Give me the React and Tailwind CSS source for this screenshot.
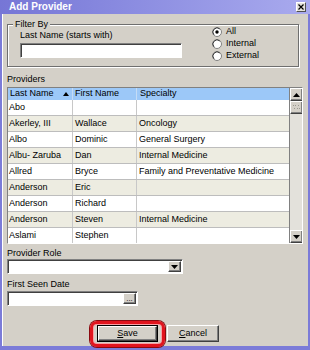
const rows = [
  ['Abo', '', ''],
  ['Akerley, III', 'Wallace', 'Oncology'],
  ['Albo', 'Dominic', 'General Surgery'],
  ['Albu- Zaruba', 'Dan', 'Internal Medicine'],
  ['Allred', 'Bryce', 'Family and Preventative Medicine'],
  ['Anderson', 'Eric', ''],
  ['Anderson', 'Richard', ''],
  ['Anderson', 'Steven', 'Internal Medicine'],
  ['Aslami', 'Stephen', ''],
]

const raised =
  'bg-[#d4d0c8] border border-t-white border-l-white border-r-[#404040] border-b-[#404040] shadow-[inset_-1px_-1px_0_#808080]'
const sunken =
  'bg-white border border-t-[#808080] border-l-[#808080] border-r-white border-b-white shadow-[inset_1px_1px_0_#404040]'

function Radio({ label, checked }) {
  return (
    <div className="h-[12px] flex items-center gap-[4px]">
      <svg width="10" height="10" viewBox="0 0 10 10">
        <circle cx="5" cy="5" r="4.5" fill="#ffffff" stroke="#808080" />
        <path d="M2 7.8 A4 4 0 0 1 2.2 2.2 A4 4 0 0 1 7.8 2" fill="none" stroke="#404040" />
        {checked && <circle cx="5" cy="5" r="1.7" fill="#000000" />}
      </svg>
      <span>{label}</span>
    </div>
  )
}

function ArrowButton({ dir }) {
  return (
    <div className={`w-[13px] h-[13px] flex items-center justify-center ${raised}`}>
      <svg width="7" height="4" viewBox="0 0 7 4">
        {dir === 'up' ? <path d="M3.5 0 L7 4 L0 4 Z" fill="#000" /> : <path d="M0 0 L7 0 L3.5 4 Z" fill="#000" />}
      </svg>
    </div>
  )
}

export default function App() {
  return (
    <div className="w-[310px] h-[350px] flex flex-col bg-[#7b7bd8] px-[2px] pb-[4px] font-['Liberation_Sans',Arial,sans-serif] text-[9px] text-black overflow-hidden">
      {/* title bar */}
      <div className="-mx-[2px] h-[14px] shrink-0 flex items-center justify-between pl-[9px] pr-[4px] bg-gradient-to-r from-[#7676d6] to-[#a9aaee]">
        <span className="text-white font-bold text-[10px] leading-none">Add Provider</span>
        <div className="w-[10px] h-[10px] bg-[#e4e2dc] border border-t-white border-l-white border-r-[#505050] border-b-[#505050] flex items-center justify-center">
          <svg width="6" height="6" viewBox="0 0 6 6">
            <path d="M0.5 0.5 L5.5 5.5 M5.5 0.5 L0.5 5.5" stroke="#000" strokeWidth="1.2" />
          </svg>
        </div>
      </div>

      {/* body */}
      <div className="flex-1 bg-[#d4d0c8] pl-[5px] pt-[10px] shadow-[inset_1px_0_0_#ffffff]">
        {/* filter group */}
        <div className="relative w-[292px] h-[43px] border border-[#6f6f6f] shadow-[1px_1px_0_#ffffff,inset_1px_1px_0_#ffffff] flex">
          <span className="absolute -top-[6px] left-[5px] px-[2px] bg-[#d4d0c8] leading-[11px]">Filter By</span>
          <div className="w-[204px] pl-[12px] pt-[5px]">
            <div className="leading-[11px]">Last Name (starts with)</div>
            <div className={`mt-[2px] w-[162px] h-[15px] ${sunken}`} />
          </div>
          <div className="pt-[1px]">
            <Radio label="All" checked />
            <Radio label="Internal" />
            <Radio label="External" />
          </div>
        </div>

        <div className="mt-[7px] leading-[11px]">Providers</div>

        {/* grid */}
        <div className="mt-[2px] w-[296px] h-[157px] border border-t-[#808080] border-l-[#808080] border-r-white border-b-white flex overflow-hidden bg-white">
          <div className="w-[281px] flex flex-col overflow-hidden">
            <div className="h-[12px] shrink-0 flex bg-[#9cc8f8]">
              <div className="w-[65px] pl-[2px] pr-[3px] flex items-center justify-between border-r border-[#c4dcf6]">
                <span>Last Name</span>
                <svg width="6" height="4" viewBox="0 0 6 4">
                  <path d="M3 0 L6 4 L0 4 Z" fill="#000" />
                </svg>
              </div>
              <div className="w-[64px] pl-[2px] flex items-center border-r border-[#c4dcf6]">First Name</div>
              <div className="flex-1 pl-[3px] flex items-center">Specialty</div>
            </div>
            {rows.map((r, i) => (
              <div
                key={i}
                className={`h-[16px] shrink-0 flex border-b border-[#bdbdbd] ${i % 2 ? 'bg-[#edece1]' : 'bg-white'}`}
              >
                <div className="w-[65px] pl-[1px] flex items-center border-r border-[#c8c8c8]">{r[0]}</div>
                <div className="w-[64px] pl-[2px] flex items-center border-r border-[#c8c8c8]">{r[1]}</div>
                <div className="flex-1 pl-[2px] flex items-center">{r[2]}</div>
              </div>
            ))}
          </div>
          <div className="w-[13px] flex flex-col bg-[#e3e1db] border-l border-[#808080]">
            <ArrowButton dir="up" />
            <div className={`w-[13px] h-[13px] flex items-center justify-center ${raised}`}>
              <svg width="7" height="7" viewBox="0 0 7 7">
                <g fill="#9a9890">
                  <rect x="0" y="1" width="1" height="1" />
                  <rect x="2" y="1" width="1" height="1" />
                  <rect x="5" y="1" width="1" height="1" />
                  <rect x="1" y="4" width="1" height="1" />
                  <rect x="4" y="4" width="1" height="1" />
                  <rect x="6" y="4" width="1" height="1" />
                </g>
              </svg>
            </div>
            <div className="flex-1" />
            <ArrowButton dir="down" />
          </div>
        </div>

        <div className="mt-[4px] leading-[11px]">Provider Role</div>
        <div className={`w-[176px] h-[15px] flex justify-end items-stretch p-[1px] ${sunken}`}>
          <div className={`w-[13px] flex items-center justify-center ${raised}`}>
            <svg width="7" height="4" viewBox="0 0 7 4">
              <path d="M0 0 L7 0 L3.5 4 Z" fill="#000" />
            </svg>
          </div>
        </div>

        <div className="mt-[5px] leading-[11px]">First Seen Date</div>
        <div className={`mt-[1px] w-[131px] h-[15px] flex justify-end items-stretch p-[1px] ${sunken}`}>
          <div className={`w-[13px] flex items-center justify-center leading-none text-[8px] ${raised}`}>...</div>
        </div>

        {/* buttons */}
        <div className="mt-[19px] ml-[90px] flex gap-[9px]">
          <div className="relative">
            <div className="w-[61px] h-[17px] border border-black">
              <div className={`w-full h-full flex items-center justify-center ${raised}`}>
                <span>
                  <span className="underline">S</span>ave
                </span>
              </div>
            </div>
            <div className="absolute -inset-x-[7px] -top-[4px] -bottom-[5px] rounded-[7px] border-[3px] border-[#e1141e] shadow-[0_0_0_1px_#8a0a10,inset_0_0_0_1px_#f7a0a4]" />
          </div>
          <div className={`w-[52px] h-[17px] flex items-center justify-center ${raised}`}>
            <span>
              <span className="underline">C</span>ancel
            </span>
          </div>
        </div>
      </div>
    </div>
  )
}
